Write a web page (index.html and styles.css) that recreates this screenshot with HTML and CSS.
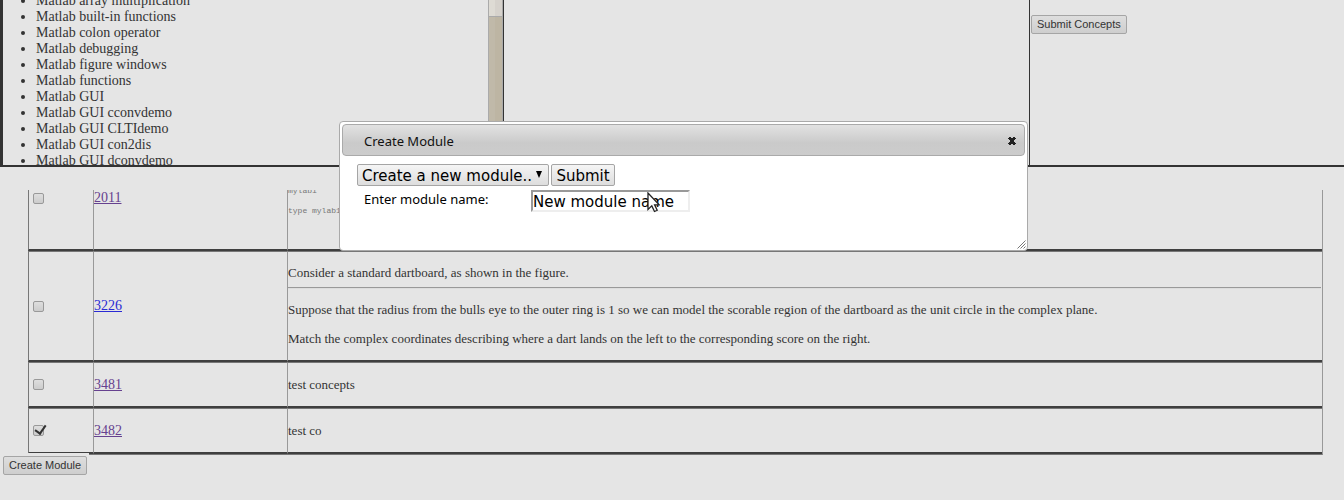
FILE: index.html
```html
<!DOCTYPE html>
<html lang="en">
<head>
<meta charset="utf-8">
<title>Create Module</title>
<link rel="stylesheet" href="styles.css">
</head>
<body>
<section class="concepts">
  <div class="panel panel-list">
    <ul class="list">
      <li>Matlab array multiplication</li>
      <li>Matlab built-in functions</li>
      <li>Matlab colon operator</li>
      <li>Matlab debugging</li>
      <li>Matlab figure windows</li>
      <li>Matlab functions</li>
      <li>Matlab GUI</li>
      <li>Matlab GUI cconvdemo</li>
      <li>Matlab GUI CLTIdemo</li>
      <li>Matlab GUI con2dis</li>
      <li>Matlab GUI dconvdemo</li>
    </ul>
    <div class="track"><div class="thumb"></div></div>
  </div>
  <div class="panel panel-mid"></div>
  <div class="panel panel-actions"><button class="button" type="button">Submit Concepts</button></div>
</section>
<main class="questions">
  <table class="table">
    <tr class="row-tall">
      <td class="col-check"><input class="check" type="checkbox" aria-label="Select 2011"></td>
      <td class="col-id"><a class="link" href="#2011">2011</a></td>
      <td class="col-text"><pre class="code">mylab1

type mylab1</pre></td>
    </tr>
    <tr>
      <td class="col-check"><input class="check" type="checkbox" aria-label="Select 3226"></td>
      <td class="col-id"><a class="link link-new" href="#3226">3226</a></td>
      <td class="col-text">
        <p class="intro">Consider a standard dartboard, as shown in the figure.</p>
        <hr class="rule">
        <p class="para">Suppose that the radius from the bulls eye to the outer ring is 1 so we can model the scorable region of the dartboard as the unit circle in the complex plane.</p>
        <p class="para">Match the complex coordinates describing where a dart lands on the left to the corresponding score on the right.</p>
      </td>
    </tr>
    <tr>
      <td class="col-check"><input class="check" type="checkbox" aria-label="Select 3481"></td>
      <td class="col-id"><a class="link" href="#3481">3481</a></td>
      <td class="col-text"><p class="para">test concepts</p></td>
    </tr>
    <tr>
      <td class="col-check"><input class="check" type="checkbox" aria-label="Select 3482" checked></td>
      <td class="col-id"><a class="link" href="#3482">3482</a></td>
      <td class="col-text"><p class="para">test co</p></td>
    </tr>
  </table>
</main>
<div class="toolbar"><button class="button" type="button">Create Module</button></div>

<div class="dialog" role="dialog" aria-labelledby="dialog-title">
  <div class="titlebar">
    <span id="dialog-title">Create Module</span>
    <button class="close" type="button" aria-label="Close">
      <svg width="8" height="8" viewBox="0 0 8 8"><path d="M1 0h2v1h2V0h2v1h1v1H7v1H6v2h1v1h1v1H7v1H5V7H3v1H1V7H0V6h1V5h1V3H1V2H0V1h1z" fill="#222"/></svg>
    </button>
  </div>
  <form class="form">
    <div class="form-row">
      <span class="select-wrap">
        <select class="select" aria-label="Module"><option>Create a new module..</option></select>
        <svg class="arrow" width="6" height="7" viewBox="0 0 6 7"><path d="M0 0h6L3 7z" fill="#000"/></svg>
      </span>
      <button class="submit" type="button">Submit</button>
    </div>
    <div class="form-row form-name">
      <label class="label" for="name">Enter module name:</label>
      <input class="input" id="name" type="text" value="New module name">
    </div>
  </form>
  <svg class="grip" width="9" height="9" viewBox="0 0 9 9"><path d="M0.500 8.500l8-8M3.500 8.500l5-5M6.500 8.500l2-2" stroke="#777" fill="none"/></svg>
</div>
<svg class="cursor" width="13" height="21" viewBox="0 0 13 21"><path d="M1 1v16.500l3.800-3.600 2.700 5.600 2.700-1.200-2.600-5.500h4.600z" fill="#fff" stroke="#222" stroke-width="1.300"/></svg>
</body>
</html>
```
FILE: styles.css
```css
* { box-sizing: border-box; }

body {
  margin: 0;
  background: #e5e5e5;
  color: #333;
  font: 13px/16px "Liberation Serif", "Times New Roman", serif;
}

.concepts {
  display: grid;
  grid-template-columns: 504fr 526fr 314fr;
  height: 167px;
  border-bottom: 2px solid #333;
}

.panel { border-right: 1px solid #333; overflow: hidden; }
.panel-list { display: flex; border-left: 3px solid #333; }
.panel-actions { border-right: 0; padding: 15px 1px; }

.list { flex: 1; margin: -7px 0 0; padding: 0 0 0 33px; font-size: 14px; }

.track {
  width: 15px;
  background: linear-gradient(90deg, #c0b9a9 50%, #bdb5a3 50%);
  border: solid #aaa;
  border-width: 0 1px;
}

.thumb {
  height: 17px;
  background: linear-gradient(90deg, #dedbd4 50%, #d6d2cc 50%);
  border-bottom: 1px solid #aaa;
}

.button {
  display: block;
  height: 19px;
  padding: 0 5px;
  border: 1px solid #a5a5a5;
  border-radius: 2px;
  background: linear-gradient(#dedede, #cecece);
  color: #333;
  font: 11px/15px "Liberation Sans", Arial, sans-serif;
  white-space: nowrap;
}

.questions {
  display: flex;
  flex-direction: column;
  justify-content: flex-end;
  height: 265px;
  margin: 23px 21px 0 28px;
  overflow: hidden;
}

.table {
  flex: none;
  width: 100%;
  table-layout: fixed;
  border-collapse: separate;
  border-spacing: 0;
  border-right: 1px solid #999;
  border-bottom: 1px solid #777;
}

.table td {
  height: 46px;
  padding: 0;
  border-top: 1px solid #777;
  border-bottom: 2px solid #3f3f3f;
  border-left: 1px solid #999;
  vertical-align: middle;
}

.table .row-tall td { height: 105px; }
.table .col-check { width: 65px; padding-left: 4px; border-left-color: #777; }
.col-id { width: 194px; }

.check {
  appearance: none;
  display: block;
  width: 11px;
  height: 11px;
  margin: 0;
  border: 1px solid #999;
  border-radius: 2px;
  background: linear-gradient(#dedede, #cccccc);
}

.check:checked::after {
  content: "";
  display: block;
  width: 5px;
  height: 9px;
  margin: -3px 0 0 3px;
  border: solid #333;
  border-width: 0 2px 2px 0;
  transform: rotate(35deg);
}

/* keeps the tick's margin inside the box */
.check:checked { display: flow-root; }

.link { color: #66418f; font-size: 14px; text-decoration: underline; }
.link-new { color: #2a2ad4; }

.code {
  margin: 0;
  padding-top: 6px;
  color: #777;
  font: 8px/10px "Liberation Mono", "Courier New", monospace;
}

.intro { margin: 13px 0 7px; line-height: 15px; }
.para { margin: 13px 0 14px; line-height: 15px; }
.rule { height: 2px; margin: 0 1px 0 0; border: 0; border-top: 1px solid #999; border-bottom: 1px solid #ddd; }

.toolbar {
  position: relative;
  width: 89px;
  margin-top: -2px;
  padding: 3px;
  background: #e5e5e5;
}

.dialog {
  position: absolute;
  top: 121px;
  left: 339px;
  width: 689px;
  height: 130px;
  padding: 2px;
  border: 1px solid #aaa;
  border-radius: 4px;
  background: #fff;
  color: #222;
  font: 13px/18px "Noto Sans", "Open Sans", sans-serif;
}

.titlebar {
  display: flex;
  align-items: center;
  justify-content: space-between;
  height: 32px;
  padding: 2px 8px 0 21px;
  border: 1px solid #aaa;
  border-radius: 4px;
  background: linear-gradient(#e2e2e2, #cacaca 60%, #cccccc);
  color: #111;
}

.close { display: flex; padding: 0; border: 0; background: none; }

.form { padding: 8px 15px; }
.form-row { display: flex; gap: 2px; }
.select-wrap { position: relative; display: flex; width: 192px; }

.select, .submit {
  height: 22px;
  border: 1px solid #a5a5a5;
  border-radius: 2px;
  background: linear-gradient(#f5f5f5, #dddddd);
  color: #000;
  font: 15px/20px "DejaVu Sans", sans-serif;
}

.select { appearance: none; width: 100%; padding: 1px 4px 0; }
.arrow { position: absolute; top: 7px; right: 7px; }
.submit { width: 64px; padding: 1px 0 0; }

.form-name { padding: 4px 0 0 7px; }
.label { width: 165px; color: #000; }

.input {
  width: 159px;
  height: 22px;
  padding: 1px 0 0;
  border: 2px solid;
  border-color: #999 #eee #eee #999;
  background: #fff;
  color: #000;
  font: 15px/18px "DejaVu Sans", sans-serif;
}

.grip { position: absolute; right: 1px; bottom: 1px; }
.cursor { position: absolute; top: 192px; left: 647px; }
```
